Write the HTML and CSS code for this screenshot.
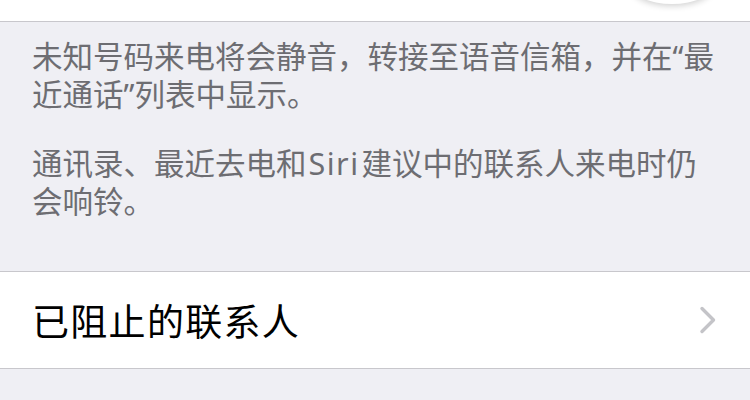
FILE: index.html
```html
<!DOCTYPE html>
<html lang="zh-CN">
	<head>
		<meta charset="UTF-8" />
		<meta name="viewport" content="width=device-width, initial-scale=1.0" />
		<title>静音未知来电</title>
		<link rel="stylesheet" href="styles.css">
	</head>
	<body>
		<div class="screen">
			<div class="cell cell-top">
				<div class="switch">
					<div class="knob"></div>
				</div>
			</div>

			<div class="footer">
				<p>未知号码来电将会静音，转接至语音信箱，并在“最近通话”列表中显示。</p>
				<p>通讯录、最近去电和<span class="latin">Siri</span>建议中的联系人来电时仍会响铃。</p>
			</div>

			<div class="cell cell-link">
				<span class="label">已阻止的联系人</span>
				<svg class="chevron" width="20" height="28" viewBox="0 0 20 28">
					<path d="M4 2.5 L15.5 14 L4 25.5" fill="none" stroke="#c4c4c8" stroke-width="3.4" stroke-linecap="round" stroke-linejoin="round" />
				</svg>
			</div>
		</div>
	</body>
</html>
```

FILE: styles.css
```css
body {
	margin: 0;
	background-color: #efeff4;
	font-family: "Noto Sans", "Noto Sans CJK SC", sans-serif;
}
.screen {
	width: 750px;
	height: 400px;
	overflow: hidden;
}
.cell {
	background: white;
	border-bottom: 1px solid #c8c7cc;
}
.cell-top {
	height: 21px;
	display: flex;
	justify-content: flex-end;
	overflow: hidden;
}
.switch {
	width: 112px;
	height: 40px;
	margin-top: -36px;
	margin-right: 36px;
	display: flex;
	justify-content: flex-end;
}
.knob {
	width: 84px;
	height: 40px;
	border-radius: 50%;
	background: white;
	box-shadow: 0 2px 6px rgba(0, 0, 0, 0.18);
}
.footer {
	padding: 15px 30px 51px 32px;
	color: #6d6d72;
	font-size: 30.5px;
	line-height: 38px;
}
.footer p {
	margin: 0;
}
.footer p + p {
	margin-top: 31px;
}
.latin {
	letter-spacing: 1.5px;
	margin: 0 2px;
}
.cell-link {
	border-top: 1px solid #c8c7cc;
	height: 96px;
	display: flex;
	align-items: center;
	justify-content: space-between;
	padding: 0 32px 0 32px;
}
.label {
	font-size: 37px;
	color: #000;
	letter-spacing: 1.3px;
}
.chevron {
	display: block;
}
```
